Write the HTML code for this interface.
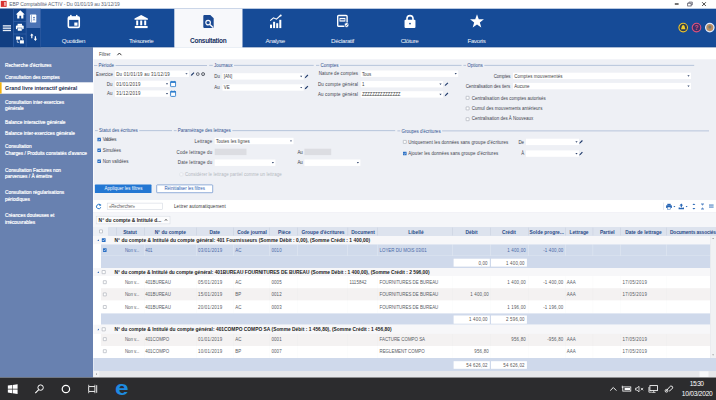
<!DOCTYPE html>
<html lang="fr"><head><meta charset="utf-8"><title>EBP Comptabilité ACTIV</title>
<style>
html,body{margin:0;padding:0;background:#fff}
body{width:716px;height:400px;overflow:hidden;position:relative;font-family:"Liberation Sans",sans-serif}
#app{position:absolute;left:0;top:0;width:716px;height:400px;overflow:hidden}
#app div,#app span,#app svg{position:absolute;display:block;box-sizing:content-box}
#app span{white-space:nowrap}
</style></head><body><div id="app">
<svg style="left:0;top:0" width="716" height="400" viewBox="0 0 716 400">
<rect x="0.00" y="0.00" width="716.00" height="8.70" fill="#ffffff"/>
<rect x="0.80" y="0.90" width="5.80" height="6.00" fill="#d8322f"/>
<rect x="4.20" y="2.00" width="1.50" height="3.80" fill="#f5c9c6"/>
<rect x="674.80" y="3.40" width="3.80" height="1.20" fill="#1a1a1a"/>
<svg x="686.50" y="1.00" width="7" height="6" viewBox="0 0 7 6"><rect x="1.2" y="2.2" width="3.4" height="2.8" fill="none" stroke="#445" stroke-width="0.7"/><path d="M2.4 2.2V1.1H5.8V3.9H4.6" fill="none" stroke="#445" stroke-width="0.7"/></svg>
<svg x="700.50" y="1.00" width="7" height="6" viewBox="0 0 7 6"><path d="M1.6 1.2L5.4 5M5.4 1.2L1.6 5" stroke="#222" stroke-width="0.8"/></svg>
<rect x="0.00" y="8.70" width="716.00" height="38.70" fill="#164b97"/>
<rect x="0.00" y="8.70" width="13.20" height="38.70" fill="#113e82"/>
<rect x="13.20" y="8.70" width="12.90" height="38.70" fill="#12448d"/>
<rect x="26.10" y="8.70" width="14.50" height="19.30" fill="#4b73b5"/>
<rect x="26.10" y="28.00" width="14.50" height="19.40" fill="#12448d"/>
<rect x="13.10" y="8.70" width="0.60" height="38.70" fill="#3c67ab"/>
<rect x="25.80" y="8.70" width="0.60" height="38.70" fill="#3c67ab"/>
<rect x="40.40" y="8.70" width="0.60" height="38.70" fill="#3460a6"/>
<rect x="13.40" y="21.10" width="12.60" height="0.60" fill="#3c67ab"/>
<rect x="13.40" y="33.70" width="12.60" height="0.60" fill="#3c67ab"/>
<rect x="2.80" y="25.20" width="8.20" height="1.35" fill="#e8edf6"/>
<rect x="2.80" y="27.50" width="8.20" height="1.35" fill="#e8edf6"/>
<rect x="2.80" y="29.80" width="8.20" height="1.35" fill="#e8edf6"/>
<svg x="15.30" y="9.30" width="10" height="10" viewBox="0 0 9 9"><path d="M4.5 0.8L0.5 4.6H1.7V8.2H3.7V5.8H5.3V8.2H7.3V4.6H8.5Z" fill="#fff"/></svg>
<svg x="15.30" y="23.00" width="9" height="9" viewBox="0 0 9 9"><rect x="2.3" y="0.8" width="4.4" height="2" fill="#fff"/><rect x="0.6" y="2.6" width="7.8" height="3.6" rx="1" fill="#fff"/><rect x="2.3" y="5" width="4.4" height="3" fill="#fff" stroke="#12448d" stroke-width="0.5"/></svg>
<svg x="15.50" y="35.50" width="9" height="9" viewBox="0 0 9 9"><rect x="0.6" y="1" width="4" height="3.2" fill="#fff"/><rect x="4.4" y="4.8" width="4" height="3.2" fill="#fff"/><path d="M1.8 4.8V6.8H3.6M7.2 4.2V2.2H5.4" fill="none" stroke="#fff" stroke-width="0.7"/></svg>
<svg x="29.30" y="14.00" width="8" height="9" viewBox="0 0 8 9"><rect x="0.8" y="0.6" width="6.2" height="7.8" rx="0.6" fill="#fff"/><rect x="1.9" y="0.6" width="0.5" height="7.8" fill="#4b73b5"/><circle cx="4.7" cy="3.6" r="0.9" fill="#4b73b5"/><path d="M3.2 6.3Q4.7 4.2 6.2 6.3Z" fill="#4b73b5"/></svg>
<svg x="29.30" y="32.60" width="9" height="9" viewBox="0 0 9 9"><path d="M2.5 0.8L0.8 3H1.9V5.6H3.1V3H4.2Z" fill="#fff"/><path d="M6.1 8.4L4.4 6.2H5.5V3.6H6.7V6.2H7.8Z" fill="#fff"/></svg>
<rect x="174.30" y="8.70" width="68.20" height="38.90" fill="#f7f8fb"/>
<svg x="65.80" y="13.50" width="16" height="16" viewBox="0 0 16 16"><rect x="2.55" y="3.5" width="10.9" height="10.4" rx="1.2" fill="none" stroke="#fff" stroke-width="1.6"/><rect x="2.4" y="3.2" width="11.2" height="3.2" fill="#fff"/><rect x="4.3" y="1.4" width="1.5" height="2.4" fill="#fff"/><rect x="10.2" y="1.4" width="1.5" height="2.4" fill="#fff"/><rect x="8.5" y="9" width="3.2" height="3.2" fill="#fff"/></svg>
<svg x="133.20" y="13.50" width="16" height="16" viewBox="0 0 16 16"><path d="M8 1.4L1.3 5V6.3H14.7V5Z" fill="#fff"/><rect x="3" y="7" width="2" height="4.8" fill="#fff"/><rect x="7" y="7" width="2" height="4.8" fill="#fff"/><rect x="11" y="7" width="2" height="4.8" fill="#fff"/><rect x="1.6" y="12.5" width="12.8" height="2.1" fill="#fff"/></svg>
<svg x="200.50" y="13.40" width="16" height="16" viewBox="0 0 16 16"><path d="M2.8 2.5Q2.8 1.5 3.8 1.5H9.8L13.2 4.9V13.5Q13.2 14.5 12.2 14.5H3.8Q2.8 14.5 2.8 13.5Z" fill="#1b4992"/><circle cx="7.6" cy="9.2" r="2.3" fill="none" stroke="#f7f8fb" stroke-width="1.2"/><path d="M9.4 11L12.6 14.2" stroke="#f7f8fb" stroke-width="1.4"/></svg>
<svg x="267.70" y="13.50" width="16" height="16" viewBox="0 0 16 16"><rect x="2.3" y="11.1" width="2" height="3.5" fill="#fff"/><rect x="5.4" y="8.3" width="2" height="6.3" fill="#fff"/><rect x="8.5" y="9.7" width="2" height="4.9" fill="#fff"/><rect x="11.6" y="6.3" width="2" height="8.3" fill="#fff"/><path d="M2.5 7.2L5.8 4.3L8.8 5.7L12.8 2" fill="none" stroke="#fff" stroke-width="1.1"/><circle cx="13" cy="2" r="1" fill="#fff"/></svg>
<svg x="334.60" y="13.30" width="16" height="16" viewBox="0 0 16 16"><rect x="3.1" y="2.2" width="9.4" height="10.8" rx="1" fill="none" stroke="#fff" stroke-width="1.4"/><rect x="4.9" y="4.6" width="5.9" height="3.7" fill="#fff"/><rect x="5.7" y="5.8" width="4.3" height="1.3" fill="#41649f"/><circle cx="12" cy="11.7" r="2.4" fill="#fff" stroke="#164b97" stroke-width="0.8"/><path d="M10.9 11.7L11.7 12.5L13.1 10.9" stroke="#164b97" stroke-width="0.7" fill="none"/></svg>
<svg x="402.00" y="13.40" width="16" height="16" viewBox="0 0 16 16"><path d="M5 7.4V5.2A3 3 0 0 1 11 5.2V7.4" fill="none" stroke="#fff" stroke-width="1.6"/><rect x="2.55" y="6.3" width="10.9" height="8.2" rx="1" fill="#fff"/><circle cx="8" cy="10.2" r="0.9" fill="#164b97"/></svg>
<svg x="469.00" y="13.00" width="16" height="16" viewBox="0 0 16 16"><path d="M8.00 1.30L9.76 6.17L14.94 6.34L10.85 9.53L12.29 14.51L8.00 11.60L3.71 14.51L5.15 9.53L1.06 6.34L6.24 6.17Z" fill="#fff"/></svg>
<svg x="677.20" y="21.60" width="12" height="12" viewBox="0 0 12 12"><circle cx="6" cy="6" r="4.3" fill="#2a3b55" stroke="#eec32a" stroke-width="1.1"/><path d="M6 3.4Q4.3 3.7 4.3 6L3.8 7.6H8.2L7.7 6Q7.7 3.7 6 3.4Z" fill="#f3cf2d"/></svg>
<svg x="690.50" y="21.60" width="12" height="12" viewBox="0 0 12 12"><circle cx="6" cy="6" r="4.3" fill="#3a2f6a" stroke="#e0527d" stroke-width="1.1"/><text x="6" y="8.3" font-size="6.4" font-weight="bold" text-anchor="middle" fill="#e0527d" font-family="Liberation Sans, sans-serif">?</text></svg>
<svg x="703.80" y="21.60" width="12" height="12" viewBox="0 0 12 12"><circle cx="6" cy="6" r="4.2" fill="#b98d62" stroke="#e3ecfb" stroke-width="1.3"/><circle cx="6" cy="5.4" r="1.5" fill="#6d7b7a"/></svg>
<rect x="0.00" y="46.80" width="174.30" height="0.70" fill="#103d80"/>
<rect x="242.50" y="46.80" width="473.50" height="0.70" fill="#103d80"/>
<rect x="0.00" y="47.50" width="93.00" height="330.00" fill="#6881b0"/>
<rect x="0.00" y="82.30" width="93.60" height="11.40" fill="#ffffff"/>
<rect x="0.00" y="82.30" width="1.60" height="11.30" fill="#f2b211"/>
<rect x="93.00" y="47.50" width="623.00" height="11.80" fill="#ffffff"/>
<svg x="116.00" y="51.00" width="7" height="6" viewBox="0 0 7 6"><path d="M1.4 4.2L3.4 2L5.4 4.2" fill="none" stroke="#222" stroke-width="0.9"/></svg>
<rect x="93.00" y="59.30" width="623.00" height="141.00" fill="#eef0f5"/>
<rect x="93.00" y="59.30" width="1.00" height="141.00" fill="#f8f9fc"/>
<rect x="94.00" y="65.10" width="3.30" height="0.80" fill="#a9b9d5"/>
<rect x="115.51" y="65.10" width="91.49" height="0.80" fill="#a9b9d5"/>
<rect x="115.00" y="70.60" width="74.00" height="6.40" fill="#fff"/>
<svg x="185.00" y="72.30" width="3" height="3" viewBox="0 0 3 3"><path d="M0.4 0.9L1.5 2.3L2.6 0.9Z" fill="#33476f"/></svg>
<svg x="190.10" y="71.50" width="5" height="5" viewBox="0 0 5 5"><path d="M0.7 4.3L1.1 3.1L3.5 0.7L4.3 1.5L1.9 3.9Z" fill="#1f3a6b"/></svg>
<svg x="195.30" y="71.60" width="11" height="5" viewBox="0 0 11 5"><circle cx="2.5" cy="2.5" r="1.4" fill="#e9ebef" stroke="#4d535e" stroke-width="0.8"/><circle cx="7.8" cy="2.5" r="1.5" fill="#e9ebef" stroke="#4d535e" stroke-width="0.9"/><circle cx="7.8" cy="2.5" r="0.45" fill="#4d535e"/></svg>
<rect x="115.00" y="80.70" width="54.50" height="6.40" fill="#fff"/>
<svg x="165.50" y="82.40" width="3" height="3" viewBox="0 0 3 3"><path d="M0.4 0.9L1.5 2.3L2.6 0.9Z" fill="#33476f"/></svg>
<rect x="115.00" y="90.40" width="54.50" height="6.40" fill="#fff"/>
<svg x="165.50" y="92.10" width="3" height="3" viewBox="0 0 3 3"><path d="M0.4 0.9L1.5 2.3L2.6 0.9Z" fill="#33476f"/></svg>
<svg x="169.60" y="80.60" width="7" height="7" viewBox="0 0 7 7"><rect x="1" y="1.1" width="5" height="5" rx="0.7" fill="#fdfeff" stroke="#2b7ccc" stroke-width="0.9"/><rect x="0.7" y="0.8" width="5.6" height="1.5" fill="#2b7ccc"/><rect x="1.7" y="0.2" width="0.8" height="1" fill="#2b7ccc"/><rect x="4.5" y="0.2" width="0.8" height="1" fill="#2b7ccc"/></svg>
<svg x="169.60" y="90.30" width="7" height="7" viewBox="0 0 7 7"><rect x="1" y="1.1" width="5" height="5" rx="0.7" fill="#fdfeff" stroke="#2b7ccc" stroke-width="0.9"/><rect x="0.7" y="0.8" width="5.6" height="1.5" fill="#2b7ccc"/><rect x="1.7" y="0.2" width="0.8" height="1" fill="#2b7ccc"/><rect x="4.5" y="0.2" width="0.8" height="1" fill="#2b7ccc"/></svg>
<rect x="209.20" y="64.90" width="3.60" height="0.80" fill="#a9b9d5"/>
<rect x="234.01" y="64.90" width="79.69" height="0.80" fill="#a9b9d5"/>
<rect x="222.50" y="73.20" width="81.20" height="6.40" fill="#fff"/>
<svg x="299.70" y="74.90" width="3" height="3" viewBox="0 0 3 3"><path d="M0.4 0.9L1.5 2.3L2.6 0.9Z" fill="#33476f"/></svg>
<svg x="304.00" y="73.90" width="5" height="5" viewBox="0 0 5 5"><path d="M0.7 4.3L1.1 3.1L3.5 0.7L4.3 1.5L1.9 3.9Z" fill="#1f3a6b"/></svg>
<rect x="222.50" y="84.30" width="81.20" height="6.40" fill="#fff"/>
<svg x="299.70" y="86.00" width="3" height="3" viewBox="0 0 3 3"><path d="M0.4 0.9L1.5 2.3L2.6 0.9Z" fill="#33476f"/></svg>
<svg x="304.00" y="85.00" width="5" height="5" viewBox="0 0 5 5"><path d="M0.7 4.3L1.1 3.1L3.5 0.7L4.3 1.5L1.9 3.9Z" fill="#1f3a6b"/></svg>
<rect x="316.00" y="64.90" width="3.30" height="0.80" fill="#a9b9d5"/>
<rect x="340.01" y="64.90" width="121.59" height="0.80" fill="#a9b9d5"/>
<rect x="360.70" y="70.50" width="97.50" height="6.40" fill="#fff"/>
<svg x="454.20" y="72.20" width="3" height="3" viewBox="0 0 3 3"><path d="M0.4 0.9L1.5 2.3L2.6 0.9Z" fill="#33476f"/></svg>
<rect x="360.70" y="81.00" width="82.30" height="6.40" fill="#fff"/>
<svg x="439.00" y="82.70" width="3" height="3" viewBox="0 0 3 3"><path d="M0.4 0.9L1.5 2.3L2.6 0.9Z" fill="#33476f"/></svg>
<svg x="444.00" y="81.70" width="5" height="5" viewBox="0 0 5 5"><path d="M0.7 4.3L1.1 3.1L3.5 0.7L4.3 1.5L1.9 3.9Z" fill="#1f3a6b"/></svg>
<rect x="360.70" y="91.20" width="82.30" height="6.40" fill="#fff"/>
<svg x="439.00" y="92.90" width="3" height="3" viewBox="0 0 3 3"><path d="M0.4 0.9L1.5 2.3L2.6 0.9Z" fill="#33476f"/></svg>
<svg x="444.00" y="91.90" width="5" height="5" viewBox="0 0 5 5"><path d="M0.7 4.3L1.1 3.1L3.5 0.7L4.3 1.5L1.9 3.9Z" fill="#1f3a6b"/></svg>
<rect x="463.40" y="64.90" width="2.70" height="0.80" fill="#a9b9d5"/>
<rect x="484.31" y="64.90" width="209.89" height="0.80" fill="#a9b9d5"/>
<rect x="513.00" y="72.70" width="178.00" height="6.40" fill="#fff"/>
<svg x="687.00" y="74.40" width="3" height="3" viewBox="0 0 3 3"><path d="M0.4 0.9L1.5 2.3L2.6 0.9Z" fill="#33476f"/></svg>
<rect x="513.00" y="82.90" width="178.00" height="6.40" fill="#fff"/>
<svg x="687.00" y="84.60" width="3" height="3" viewBox="0 0 3 3"><path d="M0.4 0.9L1.5 2.3L2.6 0.9Z" fill="#33476f"/></svg>
<rect x="466.10" y="96.30" width="3.00" height="3.00" fill="#fff" rx="0.15" stroke="#a3a8b2" stroke-width="0.6"/>
<rect x="466.10" y="106.90" width="3.00" height="3.00" fill="#fff" rx="0.15" stroke="#a3a8b2" stroke-width="0.6"/>
<rect x="466.10" y="117.70" width="3.00" height="3.00" fill="#fff" rx="0.15" stroke="#a3a8b2" stroke-width="0.6"/>
<rect x="95.00" y="130.30" width="2.80" height="0.80" fill="#a9b9d5"/>
<rect x="139.27" y="130.30" width="32.73" height="0.80" fill="#a9b9d5"/>
<rect x="97.40" y="137.70" width="3.60" height="3.60" fill="#2a6fc4" rx="0.3"/>
<svg x="97.40" y="137.70" width="3.6" height="3.6" viewBox="0 0 3.6 3.6"><path d="M0.8 1.8L1.5 2.6L2.8 1" fill="none" stroke="#fff" stroke-width="0.6"/></svg>
<rect x="97.40" y="148.40" width="3.60" height="3.60" fill="#2a6fc4" rx="0.3"/>
<svg x="97.40" y="148.40" width="3.6" height="3.6" viewBox="0 0 3.6 3.6"><path d="M0.8 1.8L1.5 2.6L2.8 1" fill="none" stroke="#fff" stroke-width="0.6"/></svg>
<rect x="97.40" y="159.40" width="3.60" height="3.60" fill="#2a6fc4" rx="0.3"/>
<svg x="97.40" y="159.40" width="3.6" height="3.6" viewBox="0 0 3.6 3.6"><path d="M0.8 1.8L1.5 2.6L2.8 1" fill="none" stroke="#fff" stroke-width="0.6"/></svg>
<rect x="173.80" y="130.30" width="2.80" height="0.80" fill="#a9b9d5"/>
<rect x="232.33" y="130.30" width="162.87" height="0.80" fill="#a9b9d5"/>
<rect x="214.70" y="137.80" width="78.80" height="6.40" fill="#fff"/>
<svg x="289.50" y="139.50" width="3" height="3" viewBox="0 0 3 3"><path d="M0.4 0.9L1.5 2.3L2.6 0.9Z" fill="#33476f"/></svg>
<rect x="214.70" y="148.70" width="31.80" height="6.40" fill="#dcdde2"/>
<rect x="304.40" y="148.70" width="26.80" height="6.40" fill="#dcdde2"/>
<rect x="214.70" y="159.50" width="60.70" height="6.40" fill="#fff"/>
<svg x="271.40" y="161.20" width="3" height="3" viewBox="0 0 3 3"><path d="M0.4 0.9L1.5 2.3L2.6 0.9Z" fill="#33476f"/></svg>
<rect x="304.40" y="159.50" width="56.00" height="6.40" fill="#fff"/>
<svg x="356.40" y="161.20" width="3" height="3" viewBox="0 0 3 3"><path d="M0.4 0.9L1.5 2.3L2.6 0.9Z" fill="#33476f"/></svg>
<rect x="179.80" y="172.80" width="3.10" height="3.10" fill="#f6f7fa" rx="0.5" stroke="#d5d8de" stroke-width="0.5"/>
<rect x="397.40" y="130.50" width="2.90" height="0.80" fill="#a9b9d5"/>
<rect x="442.13" y="130.50" width="266.87" height="0.80" fill="#a9b9d5"/>
<rect x="403.30" y="140.40" width="3.00" height="3.00" fill="#fff" rx="0.15" stroke="#a3a8b2" stroke-width="0.6"/>
<rect x="403.00" y="151.70" width="3.60" height="3.60" fill="#2a6fc4" rx="0.3"/>
<svg x="403.00" y="151.70" width="3.6" height="3.6" viewBox="0 0 3.6 3.6"><path d="M0.8 1.8L1.5 2.6L2.8 1" fill="none" stroke="#fff" stroke-width="0.6"/></svg>
<rect x="526.00" y="138.70" width="53.00" height="6.40" fill="#fff"/>
<svg x="575.00" y="140.40" width="3" height="3" viewBox="0 0 3 3"><path d="M0.4 0.9L1.5 2.3L2.6 0.9Z" fill="#33476f"/></svg>
<svg x="578.50" y="139.40" width="5" height="5" viewBox="0 0 5 5"><path d="M0.7 4.3L1.1 3.1L3.5 0.7L4.3 1.5L1.9 3.9Z" fill="#1f3a6b"/></svg>
<rect x="526.00" y="150.40" width="53.00" height="6.40" fill="#fff"/>
<svg x="575.00" y="152.10" width="3" height="3" viewBox="0 0 3 3"><path d="M0.4 0.9L1.5 2.3L2.6 0.9Z" fill="#33476f"/></svg>
<svg x="578.50" y="151.10" width="5" height="5" viewBox="0 0 5 5"><path d="M0.7 4.3L1.1 3.1L3.5 0.7L4.3 1.5L1.9 3.9Z" fill="#1f3a6b"/></svg>
<rect x="94.90" y="184.60" width="56.60" height="8.40" fill="#2377d3" rx="0.6"/>
<rect x="156.70" y="184.90" width="56.00" height="7.80" fill="#fff" rx="0.6" stroke="#4f7cc2" stroke-width="0.6"/>
<rect x="93.00" y="200.20" width="623.00" height="12.00" fill="#ffffff"/>
<rect x="93.00" y="212.20" width="623.00" height="0.40" fill="#d9dde6"/>
<svg x="95.20" y="203.00" width="7" height="7" viewBox="0 0 7 7"><path d="M5.3 2.3A2.2 2.2 0 1 0 5.6 4.2" fill="none" stroke="#2a78c8" stroke-width="1"/><path d="M4.1 0.5L6.3 1.9L4.3 3.2Z" fill="#2a78c8"/></svg>
<rect x="107.20" y="203.10" width="55.30" height="6.40" fill="#fff" stroke="#ccd2dc" stroke-width="0.5"/>
<rect x="663.00" y="202.50" width="0.50" height="7.50" fill="#d0d5de"/>
<svg x="665.50" y="203.00" width="7" height="7" viewBox="0 0 7 7"><rect x="1.8" y="0.8" width="3.4" height="1.6" fill="#2766b5"/><rect x="0.6" y="2.2" width="5.8" height="2.8" rx="0.6" fill="#2766b5"/><rect x="1.8" y="4" width="3.4" height="2.2" fill="#fff" stroke="#2766b5" stroke-width="0.5"/></svg>
<svg x="673.00" y="205.20" width="3" height="3" viewBox="0 0 3 3"><path d="M0.4 0.8L1.4 2L2.4 0.8Z" fill="#2766b5"/></svg>
<svg x="677.80" y="203.00" width="7" height="7" viewBox="0 0 7 7"><path d="M3.5 0.6L1.6 2.6H2.9V4.4H4.1V2.6H5.4Z" fill="#2766b5"/><path d="M0.8 4.6H2.2V5H4.8V4.6H6.2V6.2H0.8Z" fill="#2766b5"/></svg>
<svg x="685.20" y="205.20" width="3" height="3" viewBox="0 0 3 3"><path d="M0.4 0.8L1.4 2L2.4 0.8Z" fill="#2766b5"/></svg>
<svg x="691.40" y="203.00" width="5" height="7" viewBox="0 0 5 7"><path d="M2.5 0.6L1 2H4ZM2.5 6.4L1 5H4Z" fill="#2766b5"/></svg>
<svg x="700.00" y="203.00" width="5" height="7" viewBox="0 0 5 7"><path d="M2.5 2.6L1 1.2H4ZM2.5 4.4L1 5.8H4Z" fill="#2766b5"/><rect x="1" y="0.6" width="3" height="0.4" fill="#2766b5"/><rect x="1" y="6" width="3" height="0.4" fill="#2766b5"/></svg>
<rect x="709.00" y="204.60" width="4.60" height="0.90" fill="#2766b5"/>
<rect x="709.00" y="206.60" width="4.60" height="0.90" fill="#2766b5"/>
<rect x="93.00" y="212.60" width="623.00" height="14.40" fill="#f5f6f9"/>
<rect x="96.20" y="216.20" width="73.80" height="7.70" fill="#fcfcfd" stroke="#d5d9e2" stroke-width="0.5"/>
<svg x="164.00" y="218.00" width="4" height="4" viewBox="0 0 4 4"><path d="M0.8 2.8L2 1.2L3.2 2.8" fill="none" stroke="#222" stroke-width="0.6"/></svg>
<rect x="93.40" y="227.00" width="622.90" height="9.00" fill="#dde3ee"/>
<rect x="108.50" y="227.60" width="0.50" height="7.80" fill="#c5cddc"/>
<rect x="116.50" y="227.60" width="0.50" height="7.80" fill="#c5cddc"/>
<rect x="144.00" y="227.60" width="0.50" height="7.80" fill="#c5cddc"/>
<rect x="196.50" y="227.60" width="0.50" height="7.80" fill="#c5cddc"/>
<rect x="233.00" y="227.60" width="0.50" height="7.80" fill="#c5cddc"/>
<rect x="269.00" y="227.60" width="0.50" height="7.80" fill="#c5cddc"/>
<rect x="297.50" y="227.60" width="0.50" height="7.80" fill="#c5cddc"/>
<rect x="347.60" y="227.60" width="0.50" height="7.80" fill="#c5cddc"/>
<rect x="377.00" y="227.60" width="0.50" height="7.80" fill="#c5cddc"/>
<rect x="452.30" y="227.60" width="0.50" height="7.80" fill="#c5cddc"/>
<rect x="490.00" y="227.60" width="0.50" height="7.80" fill="#c5cddc"/>
<rect x="528.00" y="227.60" width="0.50" height="7.80" fill="#c5cddc"/>
<rect x="565.00" y="227.60" width="0.50" height="7.80" fill="#c5cddc"/>
<rect x="592.70" y="227.60" width="0.50" height="7.80" fill="#c5cddc"/>
<rect x="620.00" y="227.60" width="0.50" height="7.80" fill="#c5cddc"/>
<rect x="666.00" y="227.60" width="0.50" height="7.80" fill="#c5cddc"/>
<rect x="99.50" y="229.90" width="3.00" height="3.00" fill="#fff" rx="0.15" stroke="#a3a8b2" stroke-width="0.6"/>
<rect x="93.40" y="227.00" width="15.00" height="9.00" fill="#eef1f6"/>
<rect x="99.50" y="229.90" width="3.00" height="3.00" fill="#fff" rx="0.15" stroke="#a3a8b2" stroke-width="0.6"/>
<rect x="93.40" y="236.00" width="616.90" height="8.40" fill="#f7f7f9"/>
<svg x="96.60" y="238.70" width="3" height="3" viewBox="0 0 3 3"><path d="M2.4 0.6V2.4H0.6Z" fill="#3b6fb8"/></svg>
<rect x="101.80" y="238.30" width="3.80" height="3.80" fill="#2a6fc4" rx="0.3"/>
<svg x="101.80" y="238.30" width="3.8" height="3.8" viewBox="0 0 3.8 3.8"><path d="M0.8 1.8L1.5 2.6L2.8 1" fill="none" stroke="#fff" stroke-width="0.6"/></svg>
<rect x="101.00" y="244.40" width="609.30" height="11.40" fill="#d0daeb"/>
<rect x="93.40" y="244.40" width="7.60" height="11.40" fill="#fff"/>
<rect x="103.00" y="248.30" width="3.60" height="3.60" fill="#2a6fc4" rx="0.3"/>
<svg x="103.00" y="248.30" width="3.6" height="3.6" viewBox="0 0 3.6 3.6"><path d="M0.8 1.8L1.5 2.6L2.8 1" fill="none" stroke="#fff" stroke-width="0.6"/></svg>
<rect x="144.00" y="244.40" width="0.40" height="11.40" fill="rgba(255,255,255,0.55)"/>
<rect x="196.50" y="244.40" width="0.40" height="11.40" fill="rgba(255,255,255,0.55)"/>
<rect x="233.00" y="244.40" width="0.40" height="11.40" fill="rgba(255,255,255,0.55)"/>
<rect x="269.00" y="244.40" width="0.40" height="11.40" fill="rgba(255,255,255,0.55)"/>
<rect x="297.50" y="244.40" width="0.40" height="11.40" fill="rgba(255,255,255,0.55)"/>
<rect x="347.60" y="244.40" width="0.40" height="11.40" fill="rgba(255,255,255,0.55)"/>
<rect x="377.00" y="244.40" width="0.40" height="11.40" fill="rgba(255,255,255,0.55)"/>
<rect x="452.30" y="244.40" width="0.40" height="11.40" fill="rgba(255,255,255,0.55)"/>
<rect x="490.00" y="244.40" width="0.40" height="11.40" fill="rgba(255,255,255,0.55)"/>
<rect x="528.00" y="244.40" width="0.40" height="11.40" fill="rgba(255,255,255,0.55)"/>
<rect x="565.00" y="244.40" width="0.40" height="11.40" fill="rgba(255,255,255,0.55)"/>
<rect x="592.70" y="244.40" width="0.40" height="11.40" fill="rgba(255,255,255,0.55)"/>
<rect x="620.00" y="244.40" width="0.40" height="11.40" fill="rgba(255,255,255,0.55)"/>
<rect x="666.00" y="244.40" width="0.40" height="11.40" fill="rgba(255,255,255,0.55)"/>
<rect x="101.00" y="255.80" width="609.30" height="12.20" fill="#cfd9eb"/>
<rect x="93.40" y="255.80" width="7.60" height="12.20" fill="#fff"/>
<rect x="453.60" y="258.70" width="36.20" height="7.90" fill="#fff"/>
<rect x="491.00" y="258.70" width="35.90" height="7.90" fill="#fff"/>
<rect x="93.40" y="268.00" width="616.90" height="8.20" fill="#f7f7f9"/>
<svg x="96.60" y="270.60" width="3" height="3" viewBox="0 0 3 3"><path d="M2.4 0.6V2.4H0.6Z" fill="#3b6fb8"/></svg>
<rect x="102.10" y="270.50" width="3.20" height="3.20" fill="#fff" rx="0.15" stroke="#a3a8b2" stroke-width="0.6"/>
<rect x="101.00" y="276.20" width="609.30" height="12.00" fill="#ffffff"/>
<rect x="93.40" y="276.20" width="7.60" height="12.00" fill="#fff"/>
<rect x="103.30" y="280.70" width="3.00" height="3.00" fill="#fff" rx="0.15" stroke="#a3a8b2" stroke-width="0.6"/>
<rect x="144.00" y="276.20" width="0.40" height="12.00" fill="rgba(120,130,150,0.06)"/>
<rect x="196.50" y="276.20" width="0.40" height="12.00" fill="rgba(120,130,150,0.06)"/>
<rect x="233.00" y="276.20" width="0.40" height="12.00" fill="rgba(120,130,150,0.06)"/>
<rect x="269.00" y="276.20" width="0.40" height="12.00" fill="rgba(120,130,150,0.06)"/>
<rect x="297.50" y="276.20" width="0.40" height="12.00" fill="rgba(120,130,150,0.06)"/>
<rect x="347.60" y="276.20" width="0.40" height="12.00" fill="rgba(120,130,150,0.06)"/>
<rect x="377.00" y="276.20" width="0.40" height="12.00" fill="rgba(120,130,150,0.06)"/>
<rect x="452.30" y="276.20" width="0.40" height="12.00" fill="rgba(120,130,150,0.06)"/>
<rect x="490.00" y="276.20" width="0.40" height="12.00" fill="rgba(120,130,150,0.06)"/>
<rect x="528.00" y="276.20" width="0.40" height="12.00" fill="rgba(120,130,150,0.06)"/>
<rect x="565.00" y="276.20" width="0.40" height="12.00" fill="rgba(120,130,150,0.06)"/>
<rect x="592.70" y="276.20" width="0.40" height="12.00" fill="rgba(120,130,150,0.06)"/>
<rect x="620.00" y="276.20" width="0.40" height="12.00" fill="rgba(120,130,150,0.06)"/>
<rect x="666.00" y="276.20" width="0.40" height="12.00" fill="rgba(120,130,150,0.06)"/>
<rect x="101.00" y="288.20" width="609.30" height="12.40" fill="#f4f2f2"/>
<rect x="93.40" y="288.20" width="7.60" height="12.40" fill="#fff"/>
<rect x="103.30" y="292.90" width="3.00" height="3.00" fill="#fff" rx="0.15" stroke="#a3a8b2" stroke-width="0.6"/>
<rect x="144.00" y="288.20" width="0.40" height="12.40" fill="rgba(120,130,150,0.06)"/>
<rect x="196.50" y="288.20" width="0.40" height="12.40" fill="rgba(120,130,150,0.06)"/>
<rect x="233.00" y="288.20" width="0.40" height="12.40" fill="rgba(120,130,150,0.06)"/>
<rect x="269.00" y="288.20" width="0.40" height="12.40" fill="rgba(120,130,150,0.06)"/>
<rect x="297.50" y="288.20" width="0.40" height="12.40" fill="rgba(120,130,150,0.06)"/>
<rect x="347.60" y="288.20" width="0.40" height="12.40" fill="rgba(120,130,150,0.06)"/>
<rect x="377.00" y="288.20" width="0.40" height="12.40" fill="rgba(120,130,150,0.06)"/>
<rect x="452.30" y="288.20" width="0.40" height="12.40" fill="rgba(120,130,150,0.06)"/>
<rect x="490.00" y="288.20" width="0.40" height="12.40" fill="rgba(120,130,150,0.06)"/>
<rect x="528.00" y="288.20" width="0.40" height="12.40" fill="rgba(120,130,150,0.06)"/>
<rect x="565.00" y="288.20" width="0.40" height="12.40" fill="rgba(120,130,150,0.06)"/>
<rect x="592.70" y="288.20" width="0.40" height="12.40" fill="rgba(120,130,150,0.06)"/>
<rect x="620.00" y="288.20" width="0.40" height="12.40" fill="rgba(120,130,150,0.06)"/>
<rect x="666.00" y="288.20" width="0.40" height="12.40" fill="rgba(120,130,150,0.06)"/>
<rect x="101.00" y="300.60" width="609.30" height="12.80" fill="#ffffff"/>
<rect x="93.40" y="300.60" width="7.60" height="12.80" fill="#fff"/>
<rect x="103.30" y="305.50" width="3.00" height="3.00" fill="#fff" rx="0.15" stroke="#a3a8b2" stroke-width="0.6"/>
<rect x="144.00" y="300.60" width="0.40" height="12.80" fill="rgba(120,130,150,0.06)"/>
<rect x="196.50" y="300.60" width="0.40" height="12.80" fill="rgba(120,130,150,0.06)"/>
<rect x="233.00" y="300.60" width="0.40" height="12.80" fill="rgba(120,130,150,0.06)"/>
<rect x="269.00" y="300.60" width="0.40" height="12.80" fill="rgba(120,130,150,0.06)"/>
<rect x="297.50" y="300.60" width="0.40" height="12.80" fill="rgba(120,130,150,0.06)"/>
<rect x="347.60" y="300.60" width="0.40" height="12.80" fill="rgba(120,130,150,0.06)"/>
<rect x="377.00" y="300.60" width="0.40" height="12.80" fill="rgba(120,130,150,0.06)"/>
<rect x="452.30" y="300.60" width="0.40" height="12.80" fill="rgba(120,130,150,0.06)"/>
<rect x="490.00" y="300.60" width="0.40" height="12.80" fill="rgba(120,130,150,0.06)"/>
<rect x="528.00" y="300.60" width="0.40" height="12.80" fill="rgba(120,130,150,0.06)"/>
<rect x="565.00" y="300.60" width="0.40" height="12.80" fill="rgba(120,130,150,0.06)"/>
<rect x="592.70" y="300.60" width="0.40" height="12.80" fill="rgba(120,130,150,0.06)"/>
<rect x="620.00" y="300.60" width="0.40" height="12.80" fill="rgba(120,130,150,0.06)"/>
<rect x="666.00" y="300.60" width="0.40" height="12.80" fill="rgba(120,130,150,0.06)"/>
<rect x="101.00" y="313.40" width="609.30" height="11.30" fill="#cfd9eb"/>
<rect x="93.40" y="313.40" width="7.60" height="11.30" fill="#fff"/>
<rect x="453.60" y="315.50" width="36.20" height="8.20" fill="#fff"/>
<rect x="491.00" y="315.50" width="35.90" height="8.20" fill="#fff"/>
<rect x="93.40" y="324.70" width="616.90" height="9.20" fill="#f7f7f9"/>
<svg x="96.60" y="327.80" width="3" height="3" viewBox="0 0 3 3"><path d="M2.4 0.6V2.4H0.6Z" fill="#3b6fb8"/></svg>
<rect x="102.10" y="327.70" width="3.20" height="3.20" fill="#fff" rx="0.15" stroke="#a3a8b2" stroke-width="0.6"/>
<rect x="101.00" y="333.90" width="609.30" height="12.30" fill="#f4f2f2"/>
<rect x="93.40" y="333.90" width="7.60" height="12.30" fill="#fff"/>
<rect x="103.30" y="337.65" width="3.00" height="3.00" fill="#fff" rx="0.15" stroke="#a3a8b2" stroke-width="0.6"/>
<rect x="144.00" y="333.90" width="0.40" height="12.30" fill="rgba(120,130,150,0.06)"/>
<rect x="196.50" y="333.90" width="0.40" height="12.30" fill="rgba(120,130,150,0.06)"/>
<rect x="233.00" y="333.90" width="0.40" height="12.30" fill="rgba(120,130,150,0.06)"/>
<rect x="269.00" y="333.90" width="0.40" height="12.30" fill="rgba(120,130,150,0.06)"/>
<rect x="297.50" y="333.90" width="0.40" height="12.30" fill="rgba(120,130,150,0.06)"/>
<rect x="347.60" y="333.90" width="0.40" height="12.30" fill="rgba(120,130,150,0.06)"/>
<rect x="377.00" y="333.90" width="0.40" height="12.30" fill="rgba(120,130,150,0.06)"/>
<rect x="452.30" y="333.90" width="0.40" height="12.30" fill="rgba(120,130,150,0.06)"/>
<rect x="490.00" y="333.90" width="0.40" height="12.30" fill="rgba(120,130,150,0.06)"/>
<rect x="528.00" y="333.90" width="0.40" height="12.30" fill="rgba(120,130,150,0.06)"/>
<rect x="565.00" y="333.90" width="0.40" height="12.30" fill="rgba(120,130,150,0.06)"/>
<rect x="592.70" y="333.90" width="0.40" height="12.30" fill="rgba(120,130,150,0.06)"/>
<rect x="620.00" y="333.90" width="0.40" height="12.30" fill="rgba(120,130,150,0.06)"/>
<rect x="666.00" y="333.90" width="0.40" height="12.30" fill="rgba(120,130,150,0.06)"/>
<rect x="101.00" y="346.20" width="609.30" height="11.80" fill="#ffffff"/>
<rect x="93.40" y="346.20" width="7.60" height="11.80" fill="#fff"/>
<rect x="103.30" y="349.70" width="3.00" height="3.00" fill="#fff" rx="0.15" stroke="#a3a8b2" stroke-width="0.6"/>
<rect x="144.00" y="346.20" width="0.40" height="11.80" fill="rgba(120,130,150,0.06)"/>
<rect x="196.50" y="346.20" width="0.40" height="11.80" fill="rgba(120,130,150,0.06)"/>
<rect x="233.00" y="346.20" width="0.40" height="11.80" fill="rgba(120,130,150,0.06)"/>
<rect x="269.00" y="346.20" width="0.40" height="11.80" fill="rgba(120,130,150,0.06)"/>
<rect x="297.50" y="346.20" width="0.40" height="11.80" fill="rgba(120,130,150,0.06)"/>
<rect x="347.60" y="346.20" width="0.40" height="11.80" fill="rgba(120,130,150,0.06)"/>
<rect x="377.00" y="346.20" width="0.40" height="11.80" fill="rgba(120,130,150,0.06)"/>
<rect x="452.30" y="346.20" width="0.40" height="11.80" fill="rgba(120,130,150,0.06)"/>
<rect x="490.00" y="346.20" width="0.40" height="11.80" fill="rgba(120,130,150,0.06)"/>
<rect x="528.00" y="346.20" width="0.40" height="11.80" fill="rgba(120,130,150,0.06)"/>
<rect x="565.00" y="346.20" width="0.40" height="11.80" fill="rgba(120,130,150,0.06)"/>
<rect x="592.70" y="346.20" width="0.40" height="11.80" fill="rgba(120,130,150,0.06)"/>
<rect x="620.00" y="346.20" width="0.40" height="11.80" fill="rgba(120,130,150,0.06)"/>
<rect x="666.00" y="346.20" width="0.40" height="11.80" fill="rgba(120,130,150,0.06)"/>
<rect x="101.00" y="358.00" width="615.00" height="13.00" fill="#cfd9eb"/>
<rect x="93.40" y="358.00" width="7.60" height="13.00" fill="#cfd9eb"/>
<rect x="453.60" y="361.20" width="36.20" height="7.60" fill="#fff"/>
<rect x="491.00" y="361.20" width="35.90" height="7.60" fill="#fff"/>
<rect x="710.30" y="236.00" width="5.70" height="122.00" fill="#f1f2f4"/>
<rect x="710.00" y="236.00" width="0.40" height="122.00" fill="#dcdfe5"/>
<svg x="711.60" y="237.00" width="3" height="3" viewBox="0 0 3 3"><path d="M0.6 2L1.5 0.9L2.4 2Z" fill="#777"/></svg>
<svg x="711.60" y="353.40" width="3" height="3" viewBox="0 0 3 3"><path d="M0.6 1L1.5 2.1L2.4 1Z" fill="#777"/></svg>
<rect x="93.00" y="371.00" width="623.00" height="6.50" fill="#e6e7ea"/>
<rect x="93.40" y="370.80" width="6.00" height="6.70" fill="#f3f4f6"/>
<svg x="95.00" y="372.60" width="3" height="3" viewBox="0 0 3 3"><path d="M2 0.6L0.9 1.5L2 2.4Z" fill="#777"/></svg>
<rect x="699.50" y="371.30" width="9.00" height="5.70" fill="#f7f8fa"/>
<rect x="0.00" y="377.50" width="716.00" height="22.50" fill="#2c2c2e"/>
<svg x="7.20" y="383.60" width="11" height="11" viewBox="0 0 11 11"><path d="M0.6 2L4.9 1.4V5.2H0.6ZM5.5 1.3L10.4 0.6V5.2H5.5ZM0.6 5.8H4.9V9.6L0.6 9ZM5.5 5.8H10.4V10.4L5.5 9.7Z" fill="#fff"/></svg>
<svg x="33.50" y="383.00" width="13" height="12" viewBox="0 0 13 12"><circle cx="7.1" cy="4.6" r="2.7" fill="none" stroke="#fff" stroke-width="1"/><path d="M5.2 6.7L1.8 10.2" stroke="#fff" stroke-width="1.1"/></svg>
<svg x="60.00" y="383.00" width="12" height="12" viewBox="0 0 12 12"><circle cx="5.9" cy="6" r="3.7" fill="none" stroke="#fff" stroke-width="1.2"/></svg>
<svg x="86.50" y="383.00" width="13" height="12" viewBox="0 0 13 12"><rect x="2.2" y="3.6" width="6.2" height="4.8" fill="none" stroke="#fff" stroke-width="0.9"/><path d="M2.2 1.8V2.8M8.4 1.8V2.8M2.2 9.2V10.2M8.4 9.2V10.2M10.2 2.2V9.8" stroke="#fff" stroke-width="0.9"/></svg>
<svg x="609.00" y="385.00" width="9" height="8" viewBox="0 0 9 8"><path d="M1.2 5.6L4.3 2.5L7.4 5.6" fill="none" stroke="#fff" stroke-width="0.95"/></svg>
<svg x="621.00" y="384.50" width="11" height="9" viewBox="0 0 11 9"><rect x="1.8" y="2.4" width="8" height="4.2" fill="none" stroke="#fff" stroke-width="0.8"/><rect x="3.6" y="3.4" width="5.4" height="2.2" fill="#fff"/><path d="M1.3 1.2V3.6" stroke="#fff" stroke-width="0.8"/></svg>
<svg x="634.00" y="384.50" width="11" height="9" viewBox="0 0 11 9"><path d="M1.6 3.6H3L5 1.8V7.4L3 5.6H1.6Z" fill="none" stroke="#fff" stroke-width="0.75"/><path d="M6.8 3.4L9.2 5.8M9.2 3.4L6.8 5.8" stroke="#fff" stroke-width="0.75"/></svg>
<svg x="647.50" y="384.00" width="12" height="10" viewBox="0 0 12 10"><rect x="2.4" y="1.6" width="7.6" height="5" fill="none" stroke="#fff" stroke-width="0.85"/><path d="M1.4 3V8.2H4.4M6.2 6.6V8.2M4.6 8.4H8" stroke="#fff" stroke-width="0.75" fill="none"/></svg>
<svg x="663.50" y="383.60" width="12" height="10" viewBox="0 0 12 10"><path d="M2.4 7.8L5.8 3.6Q7.2 1.6 8.8 2.8Q10 4.2 8 5.8L5.6 7.6" fill="none" stroke="#fff" stroke-width="0.9"/><circle cx="3" cy="7.2" r="1.4" fill="none" stroke="#fff" stroke-width="0.8"/></svg>
</svg>
<span style="left:9.30px;top:1.66px;font-size:4.9px;line-height:5.88px;color:#596273;letter-spacing:-0.030px;">EBP Comptabilité ACTIV - Du 01/01/19 au 31/12/19</span>
<span style="left:61.83px;top:37.18px;font-size:6.2px;line-height:7.44px;color:#f2f5fa;letter-spacing:-0.357px;">Quotidien</span>
<span style="left:128.88px;top:37.18px;font-size:6.2px;line-height:7.44px;color:#f2f5fa;letter-spacing:-0.339px;">Trésorerie</span>
<span style="left:190.05px;top:37.00px;font-size:6.5px;line-height:7.80px;color:#17305f;font-weight:bold;letter-spacing:-0.285px;">Consultation</span>
<span style="left:265.41px;top:37.18px;font-size:6.2px;line-height:7.44px;color:#f2f5fa;letter-spacing:-0.381px;">Analyse</span>
<span style="left:330.99px;top:37.18px;font-size:6.2px;line-height:7.44px;color:#f2f5fa;letter-spacing:-0.317px;">Déclaratif</span>
<span style="left:400.72px;top:37.18px;font-size:6.2px;line-height:7.44px;color:#f2f5fa;letter-spacing:-0.345px;">Clôture</span>
<span style="left:467.57px;top:37.18px;font-size:6.2px;line-height:7.44px;color:#f2f5fa;letter-spacing:-0.351px;">Favoris</span>
<span style="left:5.00px;top:62.82px;font-size:4.8px;line-height:5.76px;color:#ffffff;letter-spacing:-0.007px;-webkit-text-stroke:0.18px #fff;">Recherche d'écritures</span>
<span style="left:5.00px;top:74.52px;font-size:4.8px;line-height:5.76px;color:#ffffff;letter-spacing:-0.022px;-webkit-text-stroke:0.18px #fff;">Consultation des comptes</span>
<span style="left:5.00px;top:84.82px;font-size:5.3px;line-height:6.36px;color:#1c2d4f;font-weight:bold;letter-spacing:0.005px;">Grand livre interactif général</span>
<span style="left:5.00px;top:99.52px;font-size:4.8px;line-height:5.76px;color:#ffffff;-webkit-text-stroke:0.18px #fff;">Consultation inter-exercices</span>
<span style="left:5.00px;top:106.02px;font-size:4.8px;line-height:5.76px;color:#ffffff;-webkit-text-stroke:0.18px #fff;">générale</span>
<span style="left:5.00px;top:120.22px;font-size:4.8px;line-height:5.76px;color:#ffffff;-webkit-text-stroke:0.18px #fff;">Balance interactive générale</span>
<span style="left:5.00px;top:131.32px;font-size:4.8px;line-height:5.76px;color:#ffffff;-webkit-text-stroke:0.18px #fff;">Balance inter-exercices générale</span>
<span style="left:5.00px;top:144.32px;font-size:4.8px;line-height:5.76px;color:#ffffff;-webkit-text-stroke:0.18px #fff;">Consultation</span>
<span style="left:5.00px;top:151.32px;font-size:4.8px;line-height:5.76px;color:#ffffff;-webkit-text-stroke:0.18px #fff;">Charges / Produits constatés d'avance</span>
<span style="left:5.00px;top:167.82px;font-size:4.8px;line-height:5.76px;color:#ffffff;-webkit-text-stroke:0.18px #fff;">Consultation Factures non</span>
<span style="left:5.00px;top:174.12px;font-size:4.8px;line-height:5.76px;color:#ffffff;-webkit-text-stroke:0.18px #fff;">parvenues / À émettre</span>
<span style="left:5.00px;top:190.32px;font-size:4.8px;line-height:5.76px;color:#ffffff;-webkit-text-stroke:0.18px #fff;">Consultation régularisations</span>
<span style="left:5.00px;top:196.82px;font-size:4.8px;line-height:5.76px;color:#ffffff;-webkit-text-stroke:0.18px #fff;">périodiques</span>
<span style="left:5.00px;top:212.82px;font-size:4.8px;line-height:5.76px;color:#ffffff;-webkit-text-stroke:0.18px #fff;">Créances douteuses et</span>
<span style="left:5.00px;top:219.82px;font-size:4.8px;line-height:5.76px;color:#ffffff;-webkit-text-stroke:0.18px #fff;">irrécouvrables</span>
<span style="left:99.00px;top:52.35px;font-size:4.5px;line-height:5.40px;color:#444;">Filtrer</span>
<span style="left:98.50px;top:63.15px;font-size:4.5px;line-height:5.40px;color:#2d4f8e;">Période</span>
<span style="left:96.00px;top:71.58px;font-size:4.45px;line-height:5.34px;color:#3d424d;letter-spacing:-0.008px;">Exercice</span>
<span style="left:116.20px;top:71.60px;font-size:4.42px;line-height:5.30px;color:#3c3c3c;letter-spacing:0.232px;">Du 01/01/19 au 31/12/19</span>
<span style="left:106.81px;top:81.68px;font-size:4.45px;line-height:5.34px;color:#3d424d;">Du</span>
<span style="left:116.20px;top:81.70px;font-size:4.42px;line-height:5.30px;color:#3c3c3c;letter-spacing:0.238px;">01/01/2019</span>
<span style="left:107.06px;top:91.38px;font-size:4.45px;line-height:5.34px;color:#3d424d;">Au</span>
<span style="left:116.20px;top:91.40px;font-size:4.42px;line-height:5.30px;color:#3c3c3c;letter-spacing:0.238px;">31/12/2019</span>
<span style="left:214.00px;top:62.95px;font-size:4.5px;line-height:5.40px;color:#2d4f8e;">Journaux</span>
<span style="left:214.20px;top:74.18px;font-size:4.45px;line-height:5.34px;color:#3d424d;">Du</span>
<span style="left:223.70px;top:74.20px;font-size:4.42px;line-height:5.30px;color:#3c3c3c;">[AN]</span>
<span style="left:214.20px;top:85.28px;font-size:4.45px;line-height:5.34px;color:#3d424d;">Au</span>
<span style="left:223.70px;top:85.30px;font-size:4.42px;line-height:5.30px;color:#3c3c3c;">VE</span>
<span style="left:320.50px;top:62.95px;font-size:4.5px;line-height:5.40px;color:#2d4f8e;">Comptes</span>
<span style="left:318.70px;top:71.48px;font-size:4.45px;line-height:5.34px;color:#3d424d;letter-spacing:0.118px;">Nature de comptes</span>
<span style="left:317.90px;top:81.98px;font-size:4.45px;line-height:5.34px;color:#3d424d;letter-spacing:0.165px;">Du compte général</span>
<span style="left:317.90px;top:92.18px;font-size:4.45px;line-height:5.34px;color:#3d424d;letter-spacing:0.179px;">Au compte général</span>
<span style="left:361.90px;top:71.50px;font-size:4.42px;line-height:5.30px;color:#3c3c3c;">Tous</span>
<span style="left:361.90px;top:82.00px;font-size:4.42px;line-height:5.30px;color:#3c3c3c;">1</span>
<span style="left:361.90px;top:92.20px;font-size:4.42px;line-height:5.30px;color:#3c3c3c;letter-spacing:-0.127px;">ZZZZZZZZZZZZZZZ</span>
<span style="left:467.30px;top:62.95px;font-size:4.5px;line-height:5.40px;color:#2d4f8e;">Options</span>
<span style="left:493.80px;top:73.68px;font-size:4.45px;line-height:5.34px;color:#3d424d;letter-spacing:-0.187px;">Comptes</span>
<span style="left:514.20px;top:73.70px;font-size:4.42px;line-height:5.30px;color:#3c3c3c;letter-spacing:0.096px;">Comptes mouvementés</span>
<span style="left:465.70px;top:83.88px;font-size:4.45px;line-height:5.34px;color:#3d424d;letter-spacing:-0.028px;">Centralisation des tiers</span>
<span style="left:514.20px;top:83.90px;font-size:4.42px;line-height:5.30px;color:#3c3c3c;letter-spacing:0.085px;">Aucune</span>
<span style="left:471.80px;top:95.68px;font-size:4.45px;line-height:5.34px;color:#3d424d;letter-spacing:0.034px;">Centralisation des comptes autorisés</span>
<span style="left:471.80px;top:105.98px;font-size:4.45px;line-height:5.34px;color:#3d424d;letter-spacing:0.058px;">Cumul des mouvements antérieurs</span>
<span style="left:471.80px;top:116.28px;font-size:4.45px;line-height:5.34px;color:#3d424d;letter-spacing:0.017px;">Centralisation des À Nouveaux</span>
<span style="left:99.00px;top:128.35px;font-size:4.5px;line-height:5.40px;color:#2d4f8e;">Statut des écritures</span>
<span style="left:102.70px;top:137.38px;font-size:4.45px;line-height:5.34px;color:#3d424d;letter-spacing:-0.430px;">Validées</span>
<span style="left:102.70px;top:148.08px;font-size:4.45px;line-height:5.34px;color:#3d424d;">Simulées</span>
<span style="left:102.70px;top:159.08px;font-size:4.45px;line-height:5.34px;color:#3d424d;letter-spacing:0.006px;">Non validées</span>
<span style="left:177.80px;top:128.35px;font-size:4.5px;line-height:5.40px;color:#2d4f8e;">Paramétrage des lettrages</span>
<span style="left:194.60px;top:138.78px;font-size:4.45px;line-height:5.34px;color:#3d424d;letter-spacing:0.184px;">Lettrage</span>
<span style="left:215.90px;top:138.80px;font-size:4.42px;line-height:5.30px;color:#3c3c3c;letter-spacing:0.078px;">Toutes les lignes</span>
<span style="left:176.50px;top:149.68px;font-size:4.45px;line-height:5.34px;color:#3d424d;letter-spacing:0.187px;">Code lettrage du</span>
<span style="left:297.40px;top:149.68px;font-size:4.45px;line-height:5.34px;color:#3d424d;">Au</span>
<span style="left:177.80px;top:160.48px;font-size:4.45px;line-height:5.34px;color:#3d424d;letter-spacing:0.183px;">Date lettrage du</span>
<span style="left:297.40px;top:160.48px;font-size:4.45px;line-height:5.34px;color:#3d424d;">Au</span>
<span style="left:184.90px;top:172.18px;font-size:4.45px;line-height:5.34px;color:#b4b8c0;letter-spacing:0.065px;">Considérer le lettrage partiel comme un lettrage</span>
<span style="left:401.50px;top:128.55px;font-size:4.5px;line-height:5.40px;color:#2d4f8e;">Groupes d'écritures</span>
<span style="left:408.20px;top:139.68px;font-size:4.45px;line-height:5.34px;color:#3d424d;letter-spacing:0.083px;">Uniquement les données sans groupe d'écritures</span>
<span style="left:408.20px;top:151.38px;font-size:4.45px;line-height:5.34px;color:#3d424d;letter-spacing:0.084px;">Ajouter les données sans groupe d'écritures</span>
<span style="left:518.40px;top:139.68px;font-size:4.45px;line-height:5.34px;color:#3d424d;">De</span>
<span style="left:521.30px;top:151.38px;font-size:4.45px;line-height:5.34px;color:#3d424d;">À</span>
<span style="left:104.50px;top:186.48px;font-size:4.45px;line-height:5.34px;color:#fff;letter-spacing:0.019px;">Appliquer les filtres</span>
<span style="left:164.40px;top:186.48px;font-size:4.45px;line-height:5.34px;color:#2a5db0;letter-spacing:-0.048px;">Réinitialiser les filtres</span>
<span style="left:109.00px;top:203.65px;font-size:4.42px;line-height:5.30px;color:#666;letter-spacing:-0.147px;">«Rechercher»</span>
<span style="left:174.00px;top:203.63px;font-size:4.45px;line-height:5.34px;color:#333;letter-spacing:0.153px;">Lettrer automatiquement</span>
<span style="left:98.60px;top:217.69px;font-size:4.85px;line-height:5.82px;color:#222;font-weight:bold;letter-spacing:0.044px;">N° du compte &amp; Intitulé d...</span>
<span style="left:123.13px;top:229.99px;font-size:4.85px;line-height:5.82px;color:#2a4a86;font-weight:bold;">Statut</span>
<span style="left:154.64px;top:229.99px;font-size:4.85px;line-height:5.82px;color:#2a4a86;font-weight:bold;">N° du compte</span>
<span style="left:209.44px;top:229.99px;font-size:4.85px;line-height:5.82px;color:#2a4a86;font-weight:bold;">Date</span>
<span style="left:237.18px;top:229.99px;font-size:4.85px;line-height:5.82px;color:#2a4a86;font-weight:bold;">Code journal</span>
<span style="left:278.06px;top:229.99px;font-size:4.85px;line-height:5.82px;color:#2a4a86;font-weight:bold;">Pièce</span>
<span style="left:301.40px;top:229.99px;font-size:4.85px;line-height:5.82px;color:#2a4a86;font-weight:bold;">Groupe d'écritures</span>
<span style="left:351.14px;top:229.99px;font-size:4.85px;line-height:5.82px;color:#2a4a86;font-weight:bold;">Document</span>
<span style="left:408.32px;top:229.99px;font-size:4.85px;line-height:5.82px;color:#2a4a86;font-weight:bold;">Libellé</span>
<span style="left:465.44px;top:229.99px;font-size:4.85px;line-height:5.82px;color:#2a4a86;font-weight:bold;">Débit</span>
<span style="left:501.99px;top:229.99px;font-size:4.85px;line-height:5.82px;color:#2a4a86;font-weight:bold;">Crédit</span>
<span style="left:569.43px;top:229.99px;font-size:4.85px;line-height:5.82px;color:#2a4a86;font-weight:bold;">Lettrage</span>
<span style="left:599.89px;top:229.99px;font-size:4.85px;line-height:5.82px;color:#2a4a86;font-weight:bold;">Partiel</span>
<span style="left:625.31px;top:229.99px;font-size:4.85px;line-height:5.82px;color:#2a4a86;font-weight:bold;">Date de lettrage</span>
<span style="left:529.50px;top:229.99px;font-size:4.85px;line-height:5.82px;color:#2a4a86;font-weight:bold;letter-spacing:0.036px;">Solde progre...</span>
<span style="left:670.00px;top:229.99px;font-size:4.85px;line-height:5.82px;color:#2a4a86;font-weight:bold;letter-spacing:-0.125px;">Documents associés</span>
<span style="left:114.50px;top:237.99px;font-size:4.85px;line-height:5.82px;color:#1a1a1a;font-weight:bold;letter-spacing:0.034px;">N° du compte &amp; Intitulé du compte général: 401 Fournisseurs (Somme Débit : 0,00), (Somme Crédit : 1 400,00)</span>
<span style="left:125.00px;top:248.05px;font-size:4.42px;line-height:5.30px;color:#4a69a6;letter-spacing:-0.075px;">Non v...</span>
<span style="left:145.20px;top:248.05px;font-size:4.42px;line-height:5.30px;color:#4a69a6;">401</span>
<span style="left:198.00px;top:248.05px;font-size:4.42px;line-height:5.30px;color:#4a69a6;letter-spacing:0.238px;">03/01/2019</span>
<span style="left:235.30px;top:248.05px;font-size:4.42px;line-height:5.30px;color:#4a69a6;">AC</span>
<span style="left:271.50px;top:248.05px;font-size:4.42px;line-height:5.30px;color:#4a69a6;letter-spacing:0.092px;">0010</span>
<span style="left:379.50px;top:248.05px;font-size:4.42px;line-height:5.30px;color:#4a69a6;">LOYER DU MOIS 03/01</span>
<span style="left:507.25px;top:248.05px;font-size:4.42px;line-height:5.30px;color:#4a69a6;letter-spacing:0.194px;">1 400,00</span>
<span style="left:543.14px;top:248.05px;font-size:4.42px;line-height:5.30px;color:#4a69a6;letter-spacing:0.187px;">-1 400,00</span>
<span style="left:478.42px;top:260.50px;font-size:4.42px;line-height:5.30px;color:#555;letter-spacing:0.194px;">0,00</span>
<span style="left:506.05px;top:260.50px;font-size:4.42px;line-height:5.30px;color:#555;letter-spacing:0.194px;">1 400,00</span>
<span style="left:114.50px;top:269.89px;font-size:4.85px;line-height:5.82px;color:#1a1a1a;font-weight:bold;letter-spacing:-0.012px;">N° du compte &amp; Intitulé du compte général: 401BUREAU FOURNITURES DE BUREAU (Somme Débit : 1 400,00), (Somme Crédit : 2 596,00)</span>
<span style="left:125.00px;top:280.15px;font-size:4.42px;line-height:5.30px;color:#575b63;letter-spacing:-0.075px;">Non v...</span>
<span style="left:145.20px;top:280.15px;font-size:4.42px;line-height:5.30px;color:#575b63;">401BUREAU</span>
<span style="left:198.00px;top:280.15px;font-size:4.42px;line-height:5.30px;color:#575b63;letter-spacing:0.238px;">05/01/2019</span>
<span style="left:235.30px;top:280.15px;font-size:4.42px;line-height:5.30px;color:#575b63;">AC</span>
<span style="left:271.50px;top:280.15px;font-size:4.42px;line-height:5.30px;color:#575b63;letter-spacing:0.092px;">0005</span>
<span style="left:349.50px;top:280.15px;font-size:4.42px;line-height:5.30px;color:#575b63;letter-spacing:0.064px;">1115842</span>
<span style="left:379.50px;top:280.15px;font-size:4.42px;line-height:5.30px;color:#575b63;">FOURNITURES DE BUREAU</span>
<span style="left:507.25px;top:280.15px;font-size:4.42px;line-height:5.30px;color:#575b63;letter-spacing:0.194px;">1 400,00</span>
<span style="left:543.14px;top:280.15px;font-size:4.42px;line-height:5.30px;color:#575b63;letter-spacing:0.187px;">-1 400,00</span>
<span style="left:566.80px;top:280.15px;font-size:4.42px;line-height:5.30px;color:#575b63;">AAA</span>
<span style="left:622.60px;top:280.15px;font-size:4.42px;line-height:5.30px;color:#575b63;letter-spacing:0.248px;">17/05/2019</span>
<span style="left:125.00px;top:292.35px;font-size:4.42px;line-height:5.30px;color:#575b63;letter-spacing:-0.075px;">Non v...</span>
<span style="left:145.20px;top:292.35px;font-size:4.42px;line-height:5.30px;color:#575b63;">401BUREAU</span>
<span style="left:198.00px;top:292.35px;font-size:4.42px;line-height:5.30px;color:#575b63;letter-spacing:0.238px;">15/01/2019</span>
<span style="left:235.30px;top:292.35px;font-size:4.42px;line-height:5.30px;color:#575b63;">BP</span>
<span style="left:271.50px;top:292.35px;font-size:4.42px;line-height:5.30px;color:#575b63;letter-spacing:0.092px;">0012</span>
<span style="left:379.50px;top:292.35px;font-size:4.42px;line-height:5.30px;color:#575b63;">FOURNITURES DE BUREAU</span>
<span style="left:470.25px;top:292.35px;font-size:4.42px;line-height:5.30px;color:#575b63;letter-spacing:0.194px;">1 400,00</span>
<span style="left:566.80px;top:292.35px;font-size:4.42px;line-height:5.30px;color:#575b63;">AAA</span>
<span style="left:622.60px;top:292.35px;font-size:4.42px;line-height:5.30px;color:#575b63;letter-spacing:0.248px;">17/05/2019</span>
<span style="left:125.00px;top:304.95px;font-size:4.42px;line-height:5.30px;color:#575b63;letter-spacing:-0.075px;">Non v...</span>
<span style="left:145.20px;top:304.95px;font-size:4.42px;line-height:5.30px;color:#575b63;">401BUREAU</span>
<span style="left:198.00px;top:304.95px;font-size:4.42px;line-height:5.30px;color:#575b63;letter-spacing:0.238px;">20/01/2019</span>
<span style="left:235.30px;top:304.95px;font-size:4.42px;line-height:5.30px;color:#575b63;">AC</span>
<span style="left:271.50px;top:304.95px;font-size:4.42px;line-height:5.30px;color:#575b63;letter-spacing:0.092px;">0003</span>
<span style="left:379.50px;top:304.95px;font-size:4.42px;line-height:5.30px;color:#575b63;">FOURNITURES DE BUREAU</span>
<span style="left:507.25px;top:304.95px;font-size:4.42px;line-height:5.30px;color:#575b63;letter-spacing:0.194px;">1 196,00</span>
<span style="left:543.14px;top:304.95px;font-size:4.42px;line-height:5.30px;color:#575b63;letter-spacing:0.187px;">-1 196,00</span>
<span style="left:469.05px;top:317.45px;font-size:4.42px;line-height:5.30px;color:#555;letter-spacing:0.194px;">1 400,00</span>
<span style="left:506.05px;top:317.45px;font-size:4.42px;line-height:5.30px;color:#555;letter-spacing:0.194px;">2 596,00</span>
<span style="left:114.50px;top:327.09px;font-size:4.85px;line-height:5.82px;color:#1a1a1a;font-weight:bold;letter-spacing:0.017px;">N° du compte &amp; Intitulé du compte général: 401COMPO COMPO SA (Somme Débit : 1 456,80), (Somme Crédit : 1 456,80)</span>
<span style="left:125.00px;top:337.10px;font-size:4.42px;line-height:5.30px;color:#575b63;letter-spacing:-0.075px;">Non v...</span>
<span style="left:145.20px;top:337.10px;font-size:4.42px;line-height:5.30px;color:#575b63;">401COMPO</span>
<span style="left:198.00px;top:337.10px;font-size:4.42px;line-height:5.30px;color:#575b63;letter-spacing:0.238px;">01/01/2019</span>
<span style="left:235.30px;top:337.10px;font-size:4.42px;line-height:5.30px;color:#575b63;">AC</span>
<span style="left:271.50px;top:337.10px;font-size:4.42px;line-height:5.30px;color:#575b63;letter-spacing:0.092px;">0001</span>
<span style="left:379.50px;top:337.10px;font-size:4.42px;line-height:5.30px;color:#575b63;">FACTURE COMPO SA</span>
<span style="left:511.26px;top:337.10px;font-size:4.42px;line-height:5.30px;color:#575b63;letter-spacing:0.203px;">956,80</span>
<span style="left:547.16px;top:337.10px;font-size:4.42px;line-height:5.30px;color:#575b63;letter-spacing:0.193px;">-956,80</span>
<span style="left:566.80px;top:337.10px;font-size:4.42px;line-height:5.30px;color:#575b63;">AAA</span>
<span style="left:622.60px;top:337.10px;font-size:4.42px;line-height:5.30px;color:#575b63;letter-spacing:0.248px;">17/05/2019</span>
<span style="left:125.00px;top:349.15px;font-size:4.42px;line-height:5.30px;color:#575b63;letter-spacing:-0.075px;">Non v...</span>
<span style="left:145.20px;top:349.15px;font-size:4.42px;line-height:5.30px;color:#575b63;">401COMPO</span>
<span style="left:198.00px;top:349.15px;font-size:4.42px;line-height:5.30px;color:#575b63;letter-spacing:0.238px;">10/01/2019</span>
<span style="left:235.30px;top:349.15px;font-size:4.42px;line-height:5.30px;color:#575b63;">BP</span>
<span style="left:271.50px;top:349.15px;font-size:4.42px;line-height:5.30px;color:#575b63;letter-spacing:0.092px;">0007</span>
<span style="left:379.50px;top:349.15px;font-size:4.42px;line-height:5.30px;color:#575b63;">REGLEMENT COMPO</span>
<span style="left:474.26px;top:349.15px;font-size:4.42px;line-height:5.30px;color:#575b63;letter-spacing:0.203px;">956,80</span>
<span style="left:566.80px;top:349.15px;font-size:4.42px;line-height:5.30px;color:#575b63;">AAA</span>
<span style="left:622.60px;top:349.15px;font-size:4.42px;line-height:5.30px;color:#575b63;letter-spacing:0.248px;">17/05/2019</span>
<span style="left:466.37px;top:362.85px;font-size:4.42px;line-height:5.30px;color:#555;letter-spacing:0.197px;">54 626,02</span>
<span style="left:503.37px;top:362.85px;font-size:4.42px;line-height:5.30px;color:#555;letter-spacing:0.197px;">54 626,02</span>
<span style="left:114.6px;top:378px;font-size:20px;line-height:20px;color:#1e8ae0;font-weight:bold;transform:scaleX(1.22);transform-origin:0 50%;">e</span>
<span style="left:689.80px;top:379.74px;font-size:6.6px;line-height:7.92px;color:#fff;letter-spacing:-0.583px;">15:30</span>
<span style="left:681.80px;top:389.84px;font-size:6.6px;line-height:7.92px;color:#fff;letter-spacing:-0.223px;">10/03/2020</span>
</div></body></html>
